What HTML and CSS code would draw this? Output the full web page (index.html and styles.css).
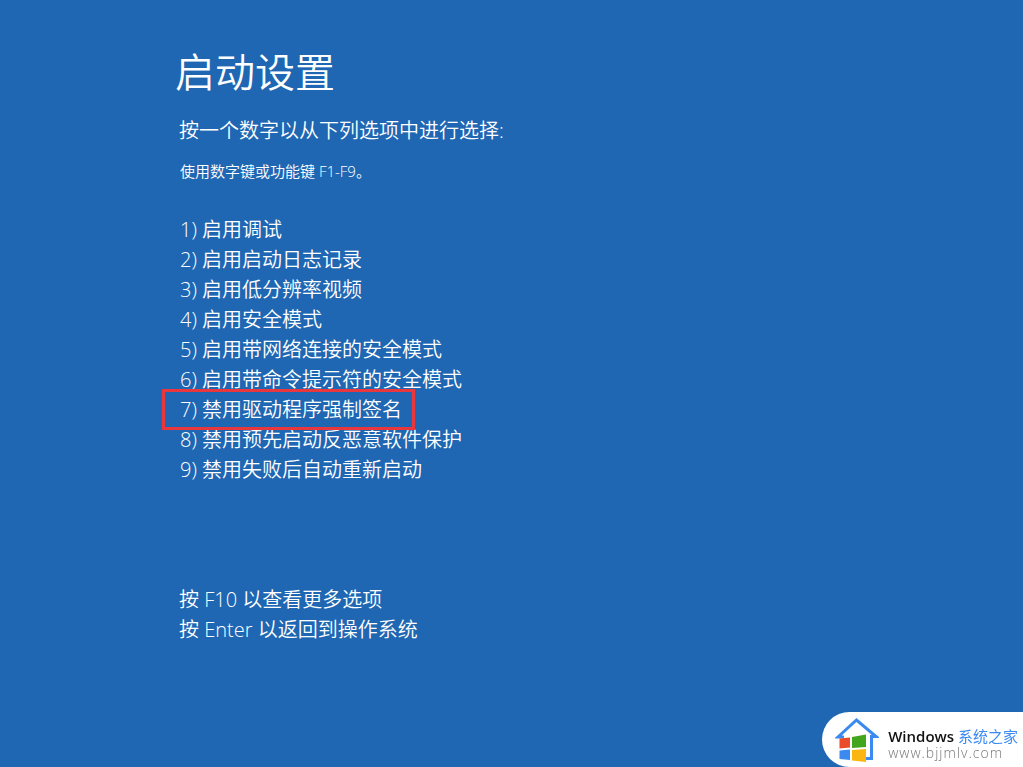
FILE: index.html
```html
<!DOCTYPE html>
<html lang="zh-CN">
<head>
    <meta charset="UTF-8">
    <meta name="viewport" content="width=device-width, initial-scale=1.0">
    <title>启动设置</title>
    <link rel="stylesheet" href="styles.css">
</head>
<body>
<main class="container">
    <h1>启动设置</h1>
    <p class="intro">按一个数字以从下列选项中进行选择:</p>
    <p class="hint">使用数字键或功能键 F1-F9。</p>

    <ul class="options">
        <li>1) 启用调试</li>
        <li>2) 启用启动日志记录</li>
        <li>3) 启用低分辨率视频</li>
        <li>4) 启用安全模式</li>
        <li>5) 启用带网络连接的安全模式</li>
        <li>6) 启用带命令提示符的安全模式</li>
        <li class="marked">7) 禁用驱动程序强制签名</li>
        <li>8) 禁用预先启动反恶意软件保护</li>
        <li>9) 禁用失败后自动重新启动</li>
    </ul>

    <div class="more">
        <p>按 F10 以查看更多选项</p>
        <p>按 Enter 以返回到操作系统</p>
    </div>
</main>

<div class="badge">
    <svg class="logo" width="44" height="44" viewBox="0 0 44 44" aria-hidden="true">
        <path d="M9 19H3L21.500 2L41 18.500H36.500V40.500H28" fill="none" stroke="#3b8af0" stroke-width="3"/>
        <path d="M4.500 20.500L15 19.500V29.500L4.500 30.500Z" fill="#ea4b2a"/>
        <path d="M17 19L31 16.500V29L17 30Z" fill="#43a51c"/>
        <path d="M4.500 32.500L15 31.500V42L4.500 41Z" fill="#3b8af0"/>
        <path d="M17 32L31 31V44L17 42.500Z" fill="#fbb612"/>
    </svg>
    <div class="site">
        <div class="site-name">Windows <span>系统之家</span></div>
        <div class="site-url">www.bjjmlv.com</div>
    </div>
</div>
</body>
</html>
```

FILE: styles.css
```css
body {
    margin: 0;
    min-height: 100vh;
    background-color: #1f67b3;
    color: #fff;
    font-family: "Open Sans", "Noto Sans CJK SC", sans-serif;
    font-size: 20px;
    font-weight: 350;
    line-height: 30px;
}
.container {
    padding: 42px 20px 20px 179px;
}
h1 {
    margin: 0 0 14px -4px;
    font-size: 40px;
    font-weight: 350;
    line-height: 60px;
}
p {
    margin: 0;
}
.hint {
    margin-top: 10px;
    padding-left: 1px;
    font-size: 15px;
}
.options {
    list-style: none;
    margin: 29px 0 100px;
    padding: 0 0 0 1px;
}
.options li {
    width: fit-content;
}
.marked {
    position: relative;
}
/* red frame, drawn over the neighbouring lines */
.marked::after {
    content: "";
    position: absolute;
    inset: -6px -13px -5px -18px;
    border: 3px solid #e8383d;
}
.badge {
    position: fixed;
    right: 0;
    bottom: 0;
    display: flex;
    align-items: center;
    gap: 9px;
    box-sizing: border-box;
    height: 55px;
    padding: 0 5px 0 13px;
    border-radius: 28px 0 0 28px;
    background-color: #fff;
}
.logo {
    flex: none;
}
.site {
    padding-top: 9px;
}
.site-name {
    color: #111;
    font-size: 15px;
    font-weight: 600;
    line-height: 18px;
    white-space: nowrap;
}
.site-name span {
    color: #3b8af0;
    font-weight: 400;
}
.site-url {
    color: #777;
    font-size: 14px;
    line-height: 16px;
    letter-spacing: 1px;
}
```
